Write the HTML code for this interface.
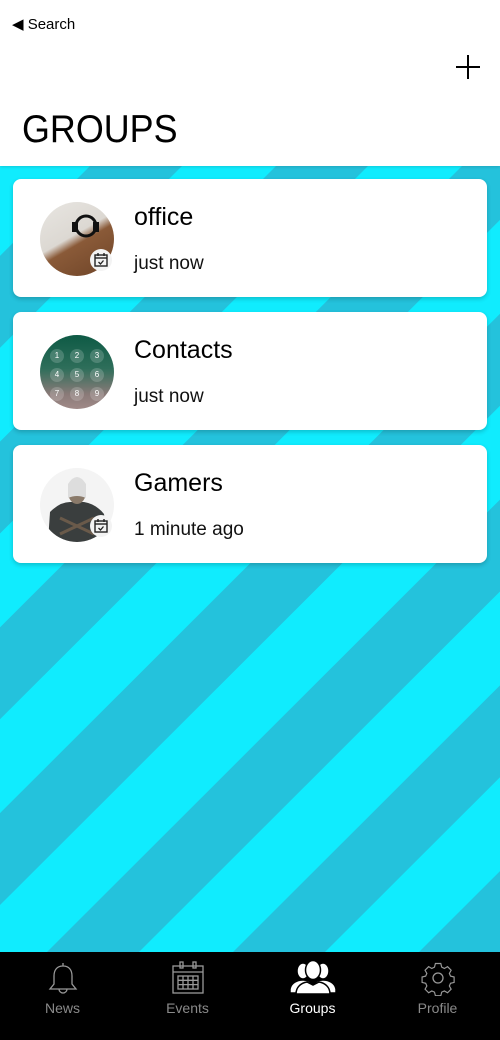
<!DOCTYPE html>
<html><head><meta charset="utf-8"><style>
*{margin:0;padding:0;box-sizing:border-box}
body{width:500px;height:1040px;overflow:hidden;background:#fff;font-family:"Liberation Sans",sans-serif;position:relative}
.hdr{position:absolute;left:0;top:0;width:500px;height:166px;background:#fff;z-index:2;box-shadow:0 1px 3px rgba(0,0,0,.15)}
.back{position:absolute;left:12px;top:15px;font-size:15px;color:#000}
.plus{position:absolute;left:456px;top:55px;width:24px;height:24px}
.plus:before{content:"";position:absolute;left:11px;top:0;width:2px;height:24px;background:#000}
.plus:after{content:"";position:absolute;left:0;top:11px;width:24px;height:2px;background:#000}
h1{position:absolute;left:22px;top:108px;font-size:39px;font-weight:normal;color:#000;transform:scaleX(.92);transform-origin:0 0}
.bg{position:absolute;left:0;top:0}
.card{position:absolute;left:13px;width:474px;height:118px;background:#fff;border-radius:8px;box-shadow:0 2px 5px rgba(0,0,0,.2);z-index:3}
.av{position:absolute;left:27px;top:23px;width:74px;height:74px;border-radius:50%;overflow:hidden}
.name{position:absolute;left:121px;top:24px;font-size:25px;color:#000}
.sub{position:absolute;left:121px;top:74px;font-size:19px;color:#111}
.badge{position:absolute;left:77px;top:70px;width:22px;height:22px;border-radius:50%;background:#f3f3f3}
.tab{position:absolute;left:0;top:952px;width:500px;height:88px;background:#000;z-index:3}
.ti{position:absolute;top:0;width:125px;text-align:center}
.ti svg{position:absolute;top:8px;left:46px}
.ti span{position:absolute;top:48px;left:0;width:125px;text-align:center;font-size:14px;color:#8a8a8a}
</style></head><body>
<svg class="bg" width="500" height="1040">
<rect x="0" y="166" width="500" height="786" fill="#10ecfe"/>
<g fill="#24c2dc">
<polygon points="-96,166 -4,166 -791,952 -883,952"/>
<polygon points="90,166 182,166 -605,952 -697,952"/>
<polygon points="276,166 368,166 -419,952 -511,952"/>
<polygon points="462,166 554,166 -233,952 -325,952"/>
<polygon points="648,166 740,166 -47,952 -139,952"/>
<polygon points="834,166 926,166 139,952 47,952"/>
<polygon points="1020,166 1112,166 325,952 233,952"/>
<polygon points="1206,166 1298,166 511,952 419,952"/>
<polygon points="1392,166 1484,166 697,952 605,952"/>
</g>
</svg>
<div class="hdr">
<div class="back">◀ Search</div>
<div class="plus"></div>
<h1>GROUPS</h1>
</div>

<div class="card" style="top:179px">
<div class="av" style="background:linear-gradient(150deg,#e8e6e2 0%,#dcd8d2 45%,#8a5a38 55%,#6e4428 100%)">
<svg width="74" height="74"><circle cx="46" cy="24" r="10" fill="none" stroke="#111" stroke-width="3"/><rect x="32" y="20" width="6" height="10" fill="#111"/><rect x="53" y="20" width="6" height="10" fill="#111"/></svg>
</div>
<div class="badge"><svg width="22" height="22"><rect x="5" y="6" width="12" height="11" fill="none" stroke="#222" stroke-width="1.4"/><line x1="5" y1="9" x2="17" y2="9" stroke="#222" stroke-width="1.4"/><line x1="8" y1="4" x2="8" y2="7" stroke="#222" stroke-width="1.4"/><line x1="14" y1="4" x2="14" y2="7" stroke="#222" stroke-width="1.4"/><path d="M8.5 13l2 2 3-3.5" fill="none" stroke="#222" stroke-width="1.3"/></svg></div>
<div class="name">office</div>
<div class="sub">just now</div>
</div>

<div class="card" style="top:312px">
<div class="av" style="background:linear-gradient(180deg,#0e5a45 0%,#2e6e5a 45%,#8a7a78 80%,#a08a88 100%)">
<svg width="74" height="74" fill="rgba(255,255,255,.18)"><circle cx="17" cy="21" r="7"/><circle cx="37" cy="21" r="7"/><circle cx="57" cy="21" r="7"/><circle cx="17" cy="40" r="7"/><circle cx="37" cy="40" r="7"/><circle cx="57" cy="40" r="7"/><circle cx="17" cy="59" r="7"/><circle cx="37" cy="59" r="7"/><circle cx="57" cy="59" r="7"/>
<g fill="#fff" font-size="8" text-anchor="middle" font-family="Liberation Sans"><text x="17" y="23">1</text><text x="37" y="23">2</text><text x="57" y="23">3</text><text x="17" y="42">4</text><text x="37" y="42">5</text><text x="57" y="42">6</text><text x="17" y="61">7</text><text x="37" y="61">8</text><text x="57" y="61">9</text></g></svg>
</div>
<div class="name">Contacts</div>
<div class="sub">just now</div>
</div>

<div class="card" style="top:445px">
<div class="av" style="background:#f4f4f4">
<svg width="74" height="74"><path d="M8 74 L10 44 Q20 34 30 34 L44 34 Q56 36 64 46 L68 74Z" fill="#3a3e3e"/><ellipse cx="37" cy="24" rx="9" ry="12" fill="#8a7a6a"/><path d="M28 16 Q37 2 46 16 L46 30 Q37 26 28 30Z" fill="#ddd"/><path d="M20 50 L54 66 M54 50 L20 66" stroke="#6a5a4a" stroke-width="3"/></svg>
</div>
<div class="badge"><svg width="22" height="22"><rect x="5" y="6" width="12" height="11" fill="none" stroke="#222" stroke-width="1.4"/><line x1="5" y1="9" x2="17" y2="9" stroke="#222" stroke-width="1.4"/><line x1="8" y1="4" x2="8" y2="7" stroke="#222" stroke-width="1.4"/><line x1="14" y1="4" x2="14" y2="7" stroke="#222" stroke-width="1.4"/><path d="M8.5 13l2 2 3-3.5" fill="none" stroke="#222" stroke-width="1.3"/></svg></div>
<div class="name">Gamers</div>
<div class="sub">1 minute ago</div>
</div>

<div class="tab">
<div class="ti" style="left:0"><svg width="34" height="36" fill="none" stroke="#999" stroke-width="1.3"><path d="M17 3v3M17 6c-6 0-9 4-9 10v8l-4 5h26l-4-5v-8c0-6-3-10-9-10z"/><path d="M13 29a4 4 0 0 0 8 0"/></svg><span>News</span></div>
<div class="ti" style="left:125px"><svg width="34" height="36" fill="none" stroke="#999" stroke-width="1.3"><rect x="2" y="6" width="30" height="27"/><line x1="2" y1="12" x2="32" y2="12"/><rect x="9" y="2" width="3" height="6"/><rect x="22" y="2" width="3" height="6"/><rect x="7" y="16" width="20" height="13"/><path d="M12 16v13M17 16v13M22 16v13M7 20.3h20M7 24.6h20"/></svg><span>Events</span></div>
<div class="ti" style="left:250px"><svg width="48" height="36" style="left:39px" fill="#fff" stroke="#000" stroke-width="1.5"><ellipse cx="34" cy="11" rx="6" ry="8"/><path d="M24 33v-8c3-4 6-5 10-5 6 0 12 3 13 9v4z"/><ellipse cx="14" cy="11" rx="6" ry="8"/><path d="M24 33v-8c-3-4-6-5-10-5-6 0-12 3-13 9v4z"/><ellipse cx="24" cy="10" rx="7.5" ry="9.5"/><path d="M7 34c0-7 5-11 11-12l6 3 6-3c6 1 11 5 11 12z"/></svg><span style="color:#fff">Groups</span></div>
<div class="ti" style="left:375px"><svg width="34" height="36" fill="none" stroke="#999" stroke-width="1.3"><path d="M14 3h6l1 4 3 1.5 3.5-2 4 4-2 3.5 1.3 3 4 1v6l-4 1-1.3 3 2 3.5-4 4-3.5-2-3 1.3-1 4h-6l-1-4-3-1.3-3.5 2-4-4 2-3.5-1.3-3-4-1v-6l4-1 1.3-3-2-3.5 4-4 3.5 2 3-1.5z" transform="translate(0 -1) scale(.9) translate(2 2)"/><circle cx="17" cy="18" r="5"/></svg><span>Profile</span></div>
</div>
</body></html>
